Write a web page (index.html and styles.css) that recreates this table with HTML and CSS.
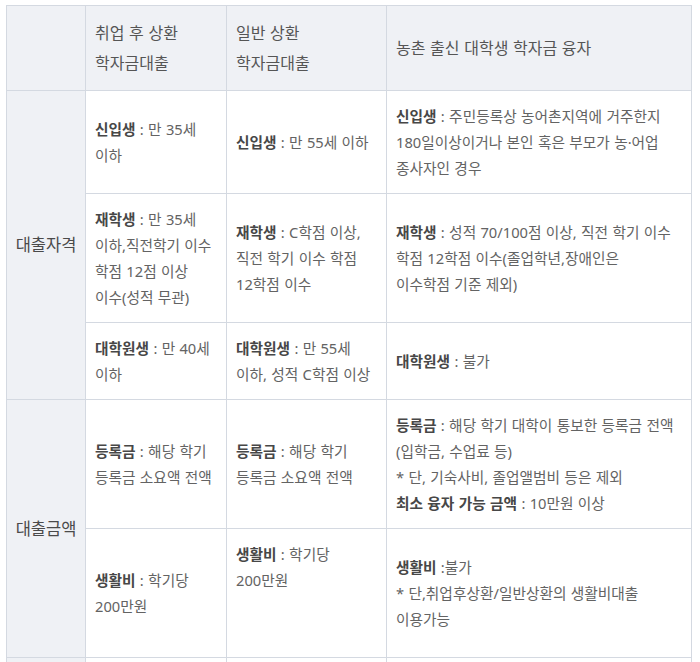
FILE: index.html
```html
<!DOCTYPE html>
<html lang="ko">
<head>
<meta charset="utf-8">
<link rel="stylesheet" href="styles.css">
</head>
<body>
<table class="loan">
  <colgroup>
    <col class="c1"><col class="c2"><col class="c3"><col class="c4">
  </colgroup>
  <thead>
    <tr>
      <th class="corner"></th>
      <th>취업 후 상환<br>학자금대출</th>
      <th>일반 상환<br>학자금대출</th>
      <th>농촌 출신 대학생 학자금 융자</th>
    </tr>
  </thead>
  <tbody>
    <tr>
      <td class="label" rowspan="3">대출자격</td>
      <td><b>신입생</b> : 만 35세<br>이하</td>
      <td><b>신입생</b> : 만 55세 이하</td>
      <td><b>신입생</b> : 주민등록상 농어촌지역에 거주한지<br>180일이상이거나 본인 혹은 부모가 농·어업<br>종사자인 경우</td>
    </tr>
    <tr>
      <td><b>재학생</b> : 만 35세<br>이하,직전학기 이수<br>학점 12점 이상<br>이수(성적 무관)</td>
      <td><b>재학생</b> : C학점 이상,<br>직전 학기 이수 학점<br>12학점 이수</td>
      <td><b>재학생</b> : 성적 70/100점 이상, 직전 학기 이수<br>학점 12학점 이수(졸업학년,장애인은<br>이수학점 기준 제외)</td>
    </tr>
    <tr>
      <td><b>대학원생</b> : 만 40세<br>이하</td>
      <td><b>대학원생</b> : 만 55세<br>이하, 성적 C학점 이상</td>
      <td><b>대학원생</b> : 불가</td>
    </tr>
    <tr>
      <td class="label" rowspan="2">대출금액</td>
      <td><b>등록금</b> : 해당 학기<br>등록금 소요액 전액</td>
      <td><b>등록금</b> : 해당 학기<br>등록금 소요액 전액</td>
      <td><b>등록금</b> : 해당 학기 대학이 통보한 등록금 전액<br>(입학금, 수업료 등)<br>* 단, 기숙사비, 졸업앨범비 등은 제외<br><b>최소 융자 가능 금액</b> : 10만원 이상</td>
    </tr>
    <tr>
      <td><b>생활비</b> : 학기당<br>200만원</td>
      <td><b>생활비</b> : 학기당<br>200만원<br><br><br></td>
      <td><b>생활비</b> :불가<br>* 단,취업후상환/일반상환의 생활비대출<br>이용가능</td>
    </tr>
    <tr class="more">
      <td class="label"></td>
      <td></td>
      <td></td>
      <td></td>
    </tr>
  </tbody>
</table>
</body>
</html>
```

FILE: styles.css
```css
html, body {
  margin: 0;
  padding: 0;
  background: #ffffff;
}

body {
  padding: 5px 0 0 6px;
  font-family: "Noto Sans", "Noto Sans CJK KR", sans-serif;
  color: #666666;
}

.loan {
  border-collapse: collapse;
  table-layout: fixed;
  width: 685px;
}

.c1 { width: 79px; }
.c2 { width: 141px; }
.c3 { width: 160px; }
.c4 { width: 305px; }

.loan th,
.loan td {
  border: 1px solid #d4d9e1;
  padding: 12px 8px 12px 9px;
  text-align: left;
  vertical-align: middle;
  white-space: nowrap;
  word-spacing: 0.5px;
}

.loan th {
  background: #eff1f5;
  font-weight: normal;
  font-size: 16px;
  line-height: 30px;
  color: #555555;
}

.loan td {
  font-size: 14.7px;
  line-height: 26px;
  color: #636363;
}

.loan td b {
  font-weight: bold;
  color: #474747;
}

.loan td.label {
  background: #eff1f5;
  text-align: center;
  font-size: 16.5px;
  color: #4a4a4a;
  padding: 12px 2px;
}

.loan tr.more td {
  height: 40px;
}
```
